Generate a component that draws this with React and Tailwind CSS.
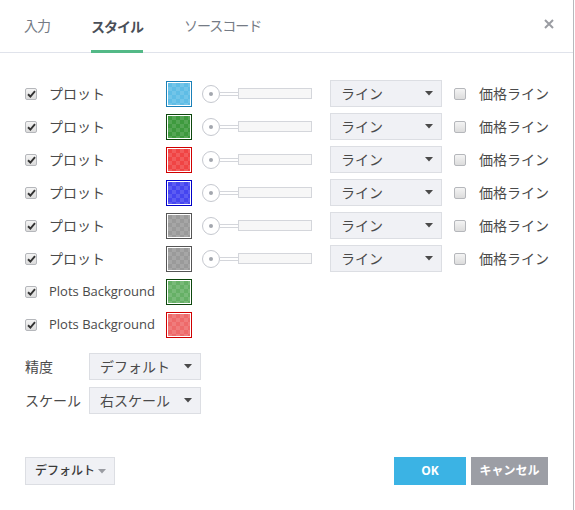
import React from "react";

const font = "font-['Open_Sans','Noto_Sans_CJK_JP',sans-serif]";

const plots = [
  { fill: "bg-[#5fbde6]", border: "border-[#1a80b8]" },
  { fill: "bg-[#3e9a3e]", border: "border-[#0d470d]" },
  { fill: "bg-[#f04444]", border: "border-[#d00000]" },
  { fill: "bg-[#4545f0]", border: "border-[#0000c8]" },
  { fill: "bg-[#9a9a9a]", border: "border-[#555555]" },
  { fill: "bg-[#9a9a9a]", border: "border-[#555555]" },
];

const backgrounds = [
  { fill: "bg-[#66b066]", border: "border-[#0d470d]" },
  { fill: "bg-[#ee6a6a]", border: "border-[#d00000]" },
];

const CheckBox = ({ checked }) => (
  <span className="w-[12px] h-[12px] shrink-0 rounded-[2px] border border-[#b5b7bb] bg-gradient-to-b from-[#f4f4f4] to-[#dcdcdc] flex items-center justify-center">
    {checked && (
      <svg width="9" height="8" viewBox="0 0 9 8">
        <path d="M1 4.2 L3.4 6.5 L8 1.2" stroke="#333" strokeWidth="1.9" fill="none" />
      </svg>
    )}
  </span>
);

const Swatch = ({ fill, border }) => (
  <div className={`w-[26px] h-[26px] shrink-0 border ${border} bg-white p-px`}>
    <div
      className={`w-full h-full ${fill} bg-[conic-gradient(rgba(255,255,255,0.12)_25%,transparent_0_50%,rgba(255,255,255,0.12)_0_75%,transparent_0)] bg-[length:8px_8px]`}
    />
  </div>
);

const Slider = () => (
  <div className="flex items-center ml-[10px] w-[110px] shrink-0">
    <span className="w-[18px] h-[18px] rounded-full border border-[#c5c8cf] bg-white flex items-center justify-center shrink-0">
      <span className="w-[4px] h-[4px] rounded-full bg-[#a3a7ae]" />
    </span>
    <span className="w-[18px] h-[4px] border-y border-[#d4d6db] bg-white" />
    <span className="flex-1 h-[11px] border border-[#d4d6db] bg-[#f7f7f7]" />
  </div>
);

const Select = ({ label, className = "" }) => (
  <div
    className={`h-[27px] shrink-0 bg-[#f0f1f5] border border-[#dcdee3] flex items-center justify-between pl-[10px] pr-[8px] text-[14px] text-[#4a4a4a] ${className}`}
  >
    <span>{label}</span>
    <svg width="8" height="5" viewBox="0 0 8 5">
      <path d="M0 0 H8 L4 4.5 Z" fill="#4a4a4a" />
    </svg>
  </div>
);

export default function App() {
  return (
    <div className={`w-[574px] h-[510px] bg-white border-r border-[#b7b9bd] flex flex-col ${font}`}>
      <div className="h-[53px] border-b border-[#e0e3eb] flex items-end pl-[24px] pr-[19px] shrink-0">
        <div className="flex items-end gap-[41px] flex-1">
          <div className="h-[51px] flex items-start pt-[14px] text-[14px] tracking-[-1px] text-[#757b85]">入力</div>
          <div className="h-[51px] flex items-start pt-[14px] text-[14px] tracking-[-1px] font-bold text-[#4a4f58] border-b-[3px] border-[#53b987] -mb-px">
            スタイル
          </div>
          <div className="h-[51px] flex items-start pt-[14px] text-[14px] tracking-[-1px] text-[#757b85]">ソースコード</div>
        </div>
        <div className="h-[51px] flex items-start pt-[18px]">
          <svg width="10" height="10" viewBox="0 0 10 10">
            <path d="M1 1 L9 9 M9 1 L1 9" stroke="#9a9ca2" strokeWidth="2" />
          </svg>
        </div>
      </div>

      <div className="flex flex-col pt-[24px] pl-[25px] text-[14px] text-[#4a4a4a]">
        {plots.map((p, i) => (
          <div key={i} className="h-[33px] flex items-center">
            <CheckBox checked />
            <span className="ml-[12px] w-[117px] shrink-0">プロット</span>
            <Swatch {...p} />
            <Slider />
            <Select label="ライン" className="ml-[18px] w-[112px]" />
            <span className="ml-[12px]">
              <CheckBox />
            </span>
            <span className="ml-[13px] whitespace-nowrap">価格ライン</span>
          </div>
        ))}
        {backgrounds.map((p, i) => (
          <div key={i} className="h-[33px] flex items-center">
            <CheckBox checked />
            <span className="ml-[12px] w-[117px] shrink-0 whitespace-nowrap text-[13px]">Plots Background</span>
            <Swatch {...p} />
          </div>
        ))}

        <div className="mt-[12px] flex flex-col gap-[7px]">
          <div className="flex items-center">
            <span className="w-[64px]">精度</span>
            <Select label="デフォルト" className="w-[112px]" />
          </div>
          <div className="flex items-center">
            <span className="w-[64px]">スケール</span>
            <Select label="右スケール" className="w-[112px]" />
          </div>
        </div>
      </div>

      <div className="mt-auto mb-[25px] px-[25px] flex items-center">
        <div className="h-[28px] w-[90px] bg-[#f0f1f5] border border-[#dcdee3] flex items-center justify-between pl-[9px] pr-[8px] text-[12px] text-[#3a3a3a] font-medium">
          <span>デフォルト</span>
          <svg width="8" height="5" viewBox="0 0 8 5">
            <path d="M0 0 H8 L4 4.5 Z" fill="#9a9ca2" />
          </svg>
        </div>
        <div className="ml-auto flex gap-[5px]">
          <button className="h-[28px] w-[72px] bg-[#3bb3e4] text-white text-[12px] font-bold">OK</button>
          <button className="h-[28px] w-[77px] bg-[#9c9ea5] text-white text-[12px] font-bold">キャンセル</button>
        </div>
      </div>
    </div>
  );
}
